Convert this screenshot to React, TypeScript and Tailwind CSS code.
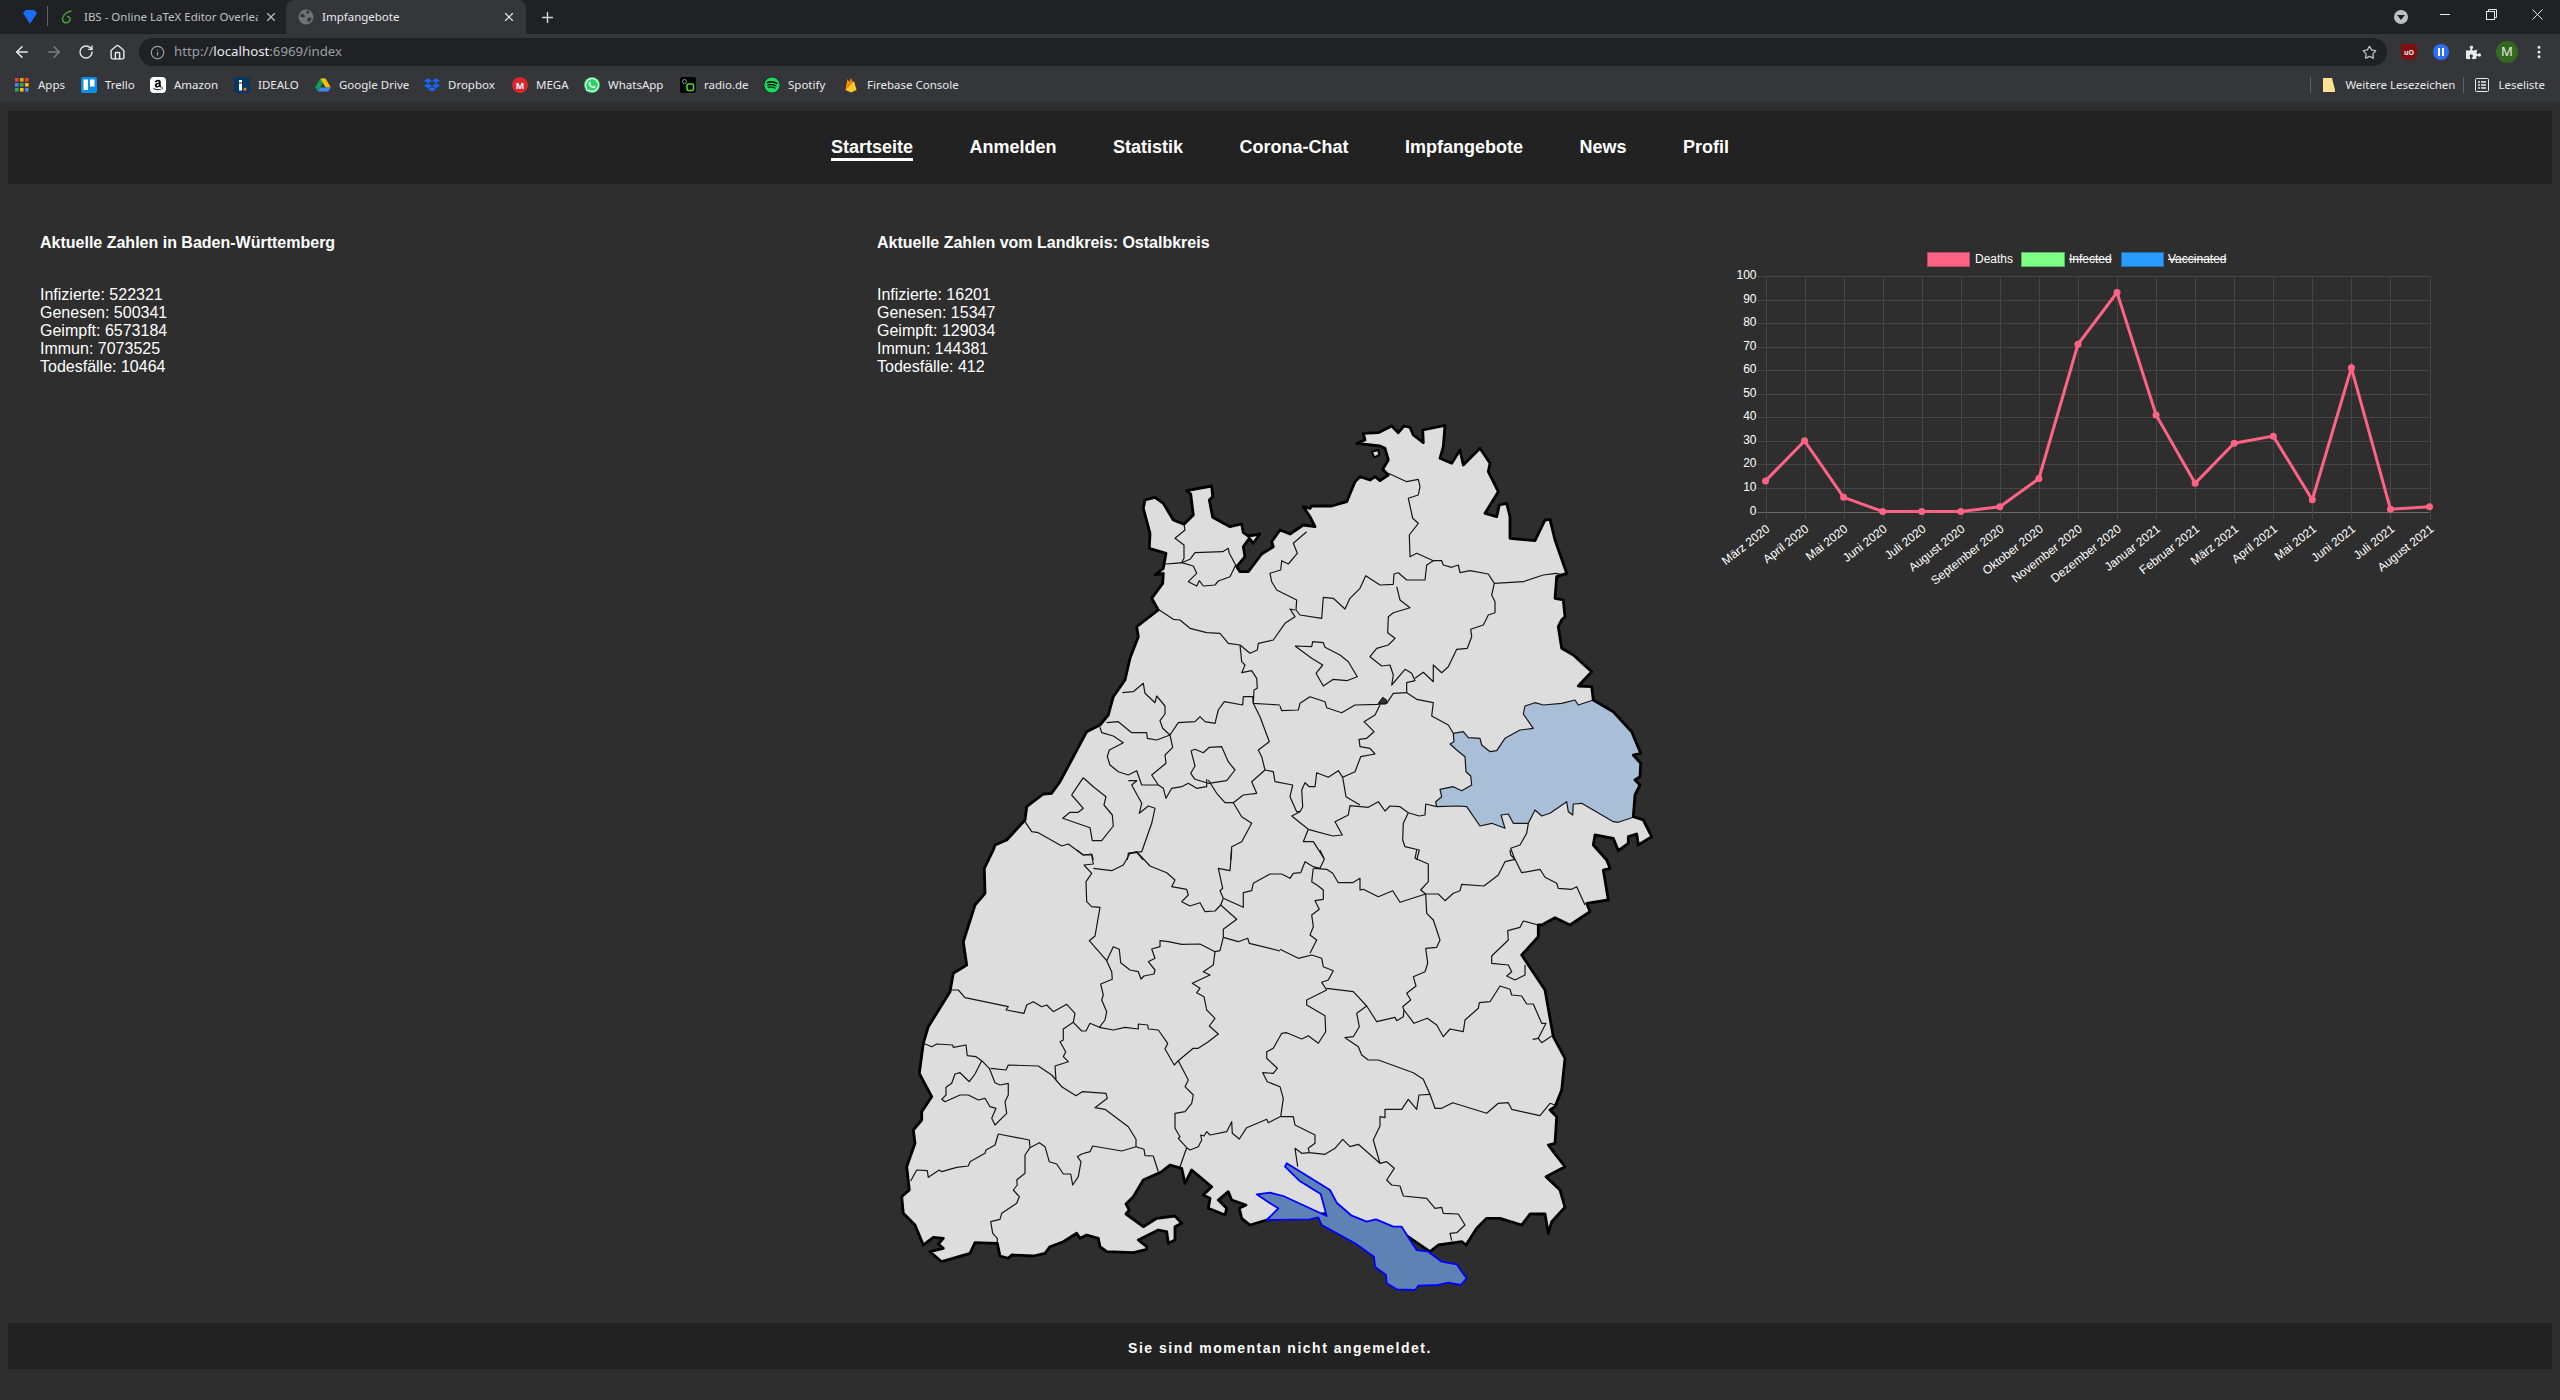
import React from 'react';
import { ArrowLeft, ArrowRight, RotateCw, House, Info, Star, Plus, X, EllipsisVertical } from 'lucide-react';
import { FaWhatsapp, FaDropbox, FaSpotify, FaAmazon, FaPuzzlePiece } from 'react-icons/fa';

// map coordinates were read from four crops of the picture, each 3x, so they get converted here
const ZONES: Record<string, [number, number]> = {
  A: [880, 410],
  B: [1260, 410],
  C: [880, 850],
  D: [1260, 850],
};

const pts = (zone: string, s: string) => {
  const [ox, oy] = ZONES[zone];
  return s
    .trim()
    .split(/\s+/)
    .map((p) => {
      const [x, y] = p.split(',').map(Number);
      return `${(ox + x / 3).toFixed(1)},${(oy + y / 3).toFixed(1)}`;
    })
    .join(' ');
};

const OUTLINE = [
  pts('A', '795,270 825,262 850,280 880,330 912,343 940,315 932,252 920,242 995,228 998,260 988,270 998,322 1050,350 1085,342 1090,368 1105,378 1140,372 1120,400 1108,385 1090,410 1095,440 1070,470 1080,485 1105,485 1145,432'),
  pts('B', '40,410 35,395 60,360 90,372 130,345 165,350 150,320 130,290 150,295 155,288 215,288 260,275 285,215 300,200 330,210 345,200 360,212 385,195 368,178 385,150 375,115 360,108 290,100 315,90 310,70 355,68 395,48 415,68 432,48 450,52 460,75 490,98 488,60 555,46 550,110 540,145 575,160 600,120 610,165 660,115 690,160 685,185 715,245 675,310 710,320 718,285 740,280 750,320 750,385 825,392 855,330 870,328 885,390 920,490 890,500 885,565 910,570 915,620 905,630 895,650 905,715 940,735 995,785 955,828 995,830 1000,870 1060,905 1115,965 1142,1030 1120,1035 1142,1060 1140,1100 1125,1110 1140,1125 1125,1155 1120,1220 1150,1230 1175,1280 1135,1305 1130,1272 1105,1280 1105,1300 1075,1322 1060,1285 1005,1275 1000,1305 1040,1350'),
  pts('D', '1050,55 1030,60 1045,150 980,160 990,185 930,225 885,203 845,225 835,225 835,260 785,315 855,420 880,560 915,625 905,720 885,770 870,780 890,800 885,880 865,885 880,905 915,950 858,980 900,1020 915,1072 875,1115 865,1150 855,1092 810,1092 785,1125 720,1105 680,1105 650,1135 618,1185 605,1175 535,1185 510,1205 430,1150 200,1090 20,1110'),
  pts('C', '1110,1125 1085,1105 1078,1075 1098,1065 1055,1050 1045,1025 1015,1050 1040,1075 1035,1095 985,1075 990,1045 970,1035 995,1010 935,960 915,1000 905,955 870,945 845,965 790,990 760,1040 738,1062 748,1080 738,1092 790,1130 830,1105 885,1098 905,1120 885,1130 885,1170 865,1180 860,1145 835,1140 775,1170 800,1190 800,1198 760,1208 680,1205 660,1190 655,1165 620,1155 600,1165 590,1150 550,1175 510,1190 495,1210 460,1218 395,1215 385,1225 360,1218 352,1180 285,1178 270,1210 185,1235 150,1205 190,1195 175,1182 190,1165 160,1162 130,1185 105,1125 70,1090 65,1040 88,1020 80,950 105,880 100,840 125,810 125,785 155,740 118,670 130,580 145,530 210,425 220,370 260,345 250,275 285,165 315,130 313,55 340,0'),
  pts('A', '345,1305 380,1290 435,1230 440,1190 490,1152 515,1150 540,1115 620,965 660,945 685,915 700,860 735,810 750,745 775,680 770,650 835,600 815,565 848,520 850,490 825,495 850,475 858,430 808,415 810,370 790,295'),
].join(' ');

const OSTALB = pts('B', '580,970 610,965 625,983 660,985 665,1005 690,1025 710,1022 735,985 780,960 820,955 790,912 795,888 825,878 850,885 905,880 945,870 955,885 1000,870 1060,905 1115,965 1142,1030 1120,1035 1142,1060 1140,1100 1125,1110 1140,1125 1125,1155 1120,1222 1075,1237 1060,1235 965,1180 940,1182 938,1215 925,1205 920,1175 870,1210 845,1218 825,1200 805,1240 760,1240 745,1212 723,1215 735,1255 695,1240 660,1248 620,1190 595,1188 530,1190 527,1175 545,1160 540,1138 580,1130 605,1142 635,1125 632,1098 618,1085 615,1040 590,1020 570,1002 582,995');

const LAKE = pts('D', '80,940 210,1020 230,1058 275,1097 320,1115 348,1108 400,1130 425,1130 450,1170 470,1200 505,1205 545,1235 590,1243 605,1265 620,1285 602,1305 565,1298 535,1305 475,1307 465,1320 410,1318 380,1300 378,1275 345,1250 342,1220 285,1180 185,1125 175,1102 150,1108 20,1110 55,1075 30,1060 -10,1033 30,1028 70,1038 200,1098 182,1032 118,992 75,950');

const BORDERS: [string, string][] = [
  ['A', '855,462 885,460 905,458 940,468 950,490 925,515 950,528 958,512 970,528 1005,525 1015,513 1050,500 1067,465'],
  ['A', '905,458 912,445 912,405 885,385 915,360 912,343'],
  ['A', '905,458 930,448 945,428 1028,425 1045,415 1048,430 1067,465'],
  ['A', '838,600 880,628 900,630 930,655 980,668 1020,670 1045,700 1080,705 1110,730 1132,720 1135,700 1180,690 1215,640 1245,620 1230,597 1245,600'],
  ['A', '1080,705 1085,755 1095,765 1085,788 1115,782 1130,805 1132,835 1122,840 1120,880'],
  ['A', '727,848 760,845 790,820 795,850 825,878 830,858 855,888 855,912 840,932 848,955 870,975 895,938 945,935 960,920 975,935 1005,940 1015,900 1033,875 1088,885 1090,860 1118,860 1120,880 1200,885'],
  ['A', '680,938 715,935 755,968 800,968 802,985 830,990 870,975 878,1012 855,1035 858,1060 815,1095 835,1125 785,1125 770,1082 745,1095 715,1085 690,1065 682,1040 688,1020 730,998 700,978 665,968 660,952'],
  ['A', '610,1103 578,1150 575,1155 610,1195 595,1207 570,1207 548,1225 630,1253 637,1292 665,1292 700,1248 697,1215 672,1185 678,1160 640,1130 610,1103'],
  ['A', '933,1022 945,1018 970,1028 988,1012 1025,1010 1045,1055 1065,1080 1040,1112 985,1120 945,1108 932,1090 945,1068 933,1022'],
  ['A', '835,1125 850,1135 858,1165 875,1135 905,1130 925,1120 950,1135 980,1130 980,1108'],
  ['A', '985,1110 1010,1150 1035,1178 1060,1178 1090,1155 1130,1150 1115,1115 1155,1080 1145,1040 1135,1020 1168,995 1140,920 1120,880'],
  ['A', '745,1112 770,1112 755,1125 785,1180 778,1210 805,1188 825,1195 815,1240 785,1325 745,1330 742,1350'],
  ['A', '1060,1178 1085,1220 1115,1240 1085,1295 1055,1310 1052,1350'],
  ['A', '435,1235 455,1265 475,1268 545,1308 565,1302 610,1335 635,1332 640,1350'],
  ['A', '745,1330 770,1327 790,1350'],
  ['B', '140,365 100,400 112,430 85,462 65,452 62,480 30,490 35,515 50,540 110,570 108,600 120,615 185,625 190,562 220,565 255,597 270,565 300,535 317,497 360,525 400,523 402,492 415,488 440,510 495,510 500,465 520,452 470,430 450,440 448,375 475,340 458,325 445,265 475,255 480,230 475,208 440,215 385,190'],
  ['B', '60,888 65,902 115,900 120,880 150,860 195,875 200,893 245,908 285,885 352,883 380,880 400,850 440,848'],
  ['B', '440,848 470,868 520,878 515,918 565,945 580,970'],
  ['B', '440,848 440,818 465,812 455,790 435,778 395,825 400,795 390,765 365,768 330,740 350,715 385,705 405,685 383,668 385,620 400,608 450,593 420,570 410,530'],
  ['B', '520,452 545,452 550,465 575,472 595,465 600,488 630,482 685,492 703,520 695,555 705,575 705,608 685,615 670,645 632,658 635,680 622,715 590,718 565,770 545,788 520,765 520,815 490,787 465,805'],
  ['B', '703,520 790,515 850,495 888,490 920,497'],
  ['B', '105,708 155,710 158,695 190,698 195,712 240,735 265,755 292,800 260,812 220,808 190,828 168,790 188,765 155,745 105,708'],
  ['B', '360,885 345,915 312,935 342,965 320,985 297,988 300,1010 330,1015 345,1032 302,1040 285,1085 248,1102 235,1082 205,1102 170,1088 165,1130 148,1130 135,1118 125,1140 128,1190 120,1205 95,1218 145,1258 218,1278 247,1275 225,1235 265,1215 270,1187 325,1192 355,1175 375,1203 390,1188 420,1190 445,1208 478,1218 495,1215 497,1182 530,1190'],
  ['B', '15,1080 40,1085 45,1115 98,1125 90,1160 110,1205 120,1205'],
  ['B', '145,1258 130,1295 160,1295 192,1345'],
  ['B', '445,1208 430,1240 428,1290 435,1310 478,1320 470,1350'],
  ['B', '805,1240 800,1270 780,1305 752,1315 765,1350'],
  ['B', '248,1102 258,1160 300,1185'],
  ['B', '580,970 610,965 625,983 660,985 665,1005 690,1025 710,1022 735,985 780,960 820,955 790,912 795,888 825,878 850,885 905,880 945,870 955,885 1000,870'],
  ['B', '530,1190 527,1175 545,1160 540,1138 580,1130 605,1142 635,1125 632,1098 618,1085 615,1040 590,1020 570,1002 582,995 580,970'],
  ['B', '530,1190 595,1188 620,1190 660,1248 695,1240 735,1255 723,1215 745,1212 760,1240 805,1240 825,1200 845,1218 870,1210 920,1175 925,1205 938,1215 940,1182 965,1180 1060,1235 1075,1237 1120,1222'],
  ['C', '590,0 610,15 635,15 640,42 612,45 635,70 618,95 620,155 635,170 660,172 645,258 628,272 680,332 695,365 697,388 662,402 670,435 665,450 680,485 675,510 658,532'],
  ['C', '640,55 695,62 730,45 750,10 770,5 810,48 860,68 885,90 875,110 920,118 925,135 905,155 930,168 960,158 975,185 1005,183 1022,165 1030,145 1020,122 1028,115 1015,55 1050,62 1055,0'],
  ['C', '1022,165 1070,208 1030,238 1030,262 1020,302 1005,305 960,282 905,283 865,275 840,272 840,290 815,297 825,325 805,335 825,360 822,372 792,378 783,387 775,365 750,360 722,338 718,298 700,290 680,332'],
  ['C', '1030,145 1090,172 1090,128 1115,122 1120,100 1170,72 1205,72'],
  ['C', '1030,262 1075,275 1103,265 1108,280 1200,303'],
  ['C', '1005,305 1000,345 970,365 990,375 937,400 960,415 950,428 972,440 980,480 1005,505 988,528 1015,552 985,575 955,595 940,595 895,632 883,645 855,597 863,580 835,540 805,537 803,525 775,522 775,537 735,532 700,540 658,532 630,520 618,543 605,543 580,517 585,490 560,463 520,485 500,465 485,470 460,455 440,465 432,490 378,480 385,470 255,443 235,420 212,420'],
  ['C', '580,517 550,537 550,570 540,575 557,605 550,620 565,635 525,648 528,690 545,710 515,675 475,648 385,645 378,660 332,655'],
  ['C', '895,632 925,690 915,710 940,735 935,760 915,785 885,790 885,835 900,860 895,865 920,893 930,900 955,890 965,870 962,855 972,858 980,845 990,855 1040,845 1055,815 1057,850 1078,867 1100,833 1160,808 1165,818 1200,800'],
  ['C', '920,893 900,950'],
  ['C', '545,710 588,737 607,725 678,730 682,745 645,773 675,778 745,830 768,868 768,890 792,898 795,917 820,918 835,965'],
  ['C', '768,890 725,903 638,888 630,905 605,912 592,920 603,935 595,980 578,1005 572,972 550,972 530,942 508,935 495,890 478,878 450,893 435,915 435,970 410,990 412,1005 400,1020 418,1040 410,1060 365,1090 360,1108 332,1115 338,1150 352,1165 352,1180'],
  ['C', '450,893 448,870 355,852 345,885 318,900 315,910 270,935 265,948 230,952 185,965 178,960 145,982 142,962 110,960 92,993'],
  ['C', '130,580 155,590 170,582 218,585 220,592 258,585 262,617 288,620 305,632 328,655 345,698 360,705 385,700 385,735 375,755 380,790 345,825 335,805 348,775 330,770 315,745 295,750 265,735 240,735 195,755 185,748 198,735 198,712 215,700 225,672 240,668 268,695 285,672 305,632'],
  ['D', '65,72 90,85 100,70 122,68 135,35 160,50 180,55 193,28 180,0'],
  ['D', '160,55 155,95 175,108 190,120 190,148 165,152 178,178 155,195 160,230 150,255 170,270 150,310'],
  ['D', '162,55 200,58 218,70 235,98 278,98 300,85 300,120 310,118 355,140 398,122 420,157 497,132'],
  ['D', '470,0 465,25 505,42 505,95 482,120 497,132 535,132 555,152 580,130 600,122 605,103 672,108 715,75 735,35 765,28 785,68 840,58 855,82 890,100 895,115 935,118 950,110 975,165'],
  ['D', '750,0 752,15 765,28'],
  ['D', '497,132 500,190 520,210 540,270 530,292 497,295 503,340 495,365 460,380 468,408 440,430 452,450 428,470 432,480 462,520 502,505 530,525 550,560 570,537 610,545 615,510 655,475 658,458 690,455 720,408 750,418 755,435 785,438 800,462 820,462 845,520 858,520 835,565 845,578 875,558'],
  ['D', '835,565 818,568'],
  ['D', '835,225 790,213 780,232 743,242 745,270 695,318 695,340 745,345 755,365 740,378 765,390 795,375 795,345'],
  ['D', '60,298 115,325 155,315 185,325 190,350 220,362 205,390 185,397 200,420'],
  ['D', '200,415 280,425 320,468 350,515 405,502 410,512 430,500 432,480'],
  ['D', '200,420 140,450 140,465 195,497 197,545 175,580 145,557 125,567 80,548 65,550 40,595 20,605 20,625 52,655 40,670 8,668 22,695 60,710 70,745 62,800 100,800 105,825 165,855 165,880 145,895 148,908 195,913 225,895 248,868 270,890 295,883 360,940 340,870 360,828 360,800 375,803 375,778 425,778 445,748 470,778 477,735 510,733'],
  ['D', '320,468 290,490 298,530 280,560 255,563 295,590 305,615 325,630 355,630 460,668 490,688 510,733 525,775 545,775 578,758 600,765 680,790 715,760 745,758 755,778 840,797 870,760 885,765'],
  ['D', '360,940 380,935 403,955 380,990 395,1005 420,1008 430,1038 500,1045 525,1075 545,1072 550,1090 595,1092 615,1125 590,1148 570,1150 575,1172'],
  ['D', '148,908 125,910 105,895 113,950'],
];

const MONTHS = ['März 2020', 'April 2020', 'Mai 2020', 'Juni 2020', 'Juli 2020', 'August 2020', 'September 2020', 'Oktober 2020', 'November 2020', 'Dezember 2020', 'Januar 2021', 'Februar 2021', 'März 2021', 'April 2021', 'Mai 2021', 'Juni 2021', 'Juli 2021', 'August 2021'];
const DEATHS = [13, 30, 6, 0, 0, 0, 2, 14, 71, 93, 41, 12, 29, 32, 5, 61, 1, 2];

const plot = { left: 1765.5, right: 2429.5, top: 276, bottom: 511.5 };
const xAt = (i: number) => plot.left + (i * (plot.right - plot.left)) / 17;
const yAt = (v: number) => plot.bottom - (v * (plot.bottom - plot.top)) / 100;

const DeathsChart = () => (
  <svg viewBox="1714 234 746 356" width="746" height="356" className="block font-['Liberation_Sans',Arial,sans-serif] text-[12px]">
    {/* legend */}
    <rect x="1927.5" y="252.5" width="42" height="14" fill="#ff6384" stroke="#b34a62" />
    <text x="1975" y="263" fill="#ffffff">Deaths</text>
    <rect x="2021.5" y="252.5" width="43" height="14" fill="#7dff86" stroke="#58b35e" />
    <text x="2069" y="263" fill="#ffffff" textDecoration="line-through">Infected</text>
    <rect x="2121.5" y="252.5" width="42" height="14" fill="#2b9cff" stroke="#1f6fb3" />
    <text x="2168" y="263" fill="#ffffff" textDecoration="line-through">Vaccinated</text>

    {/* grid */}
    {Array.from({ length: 11 }, (_, i) => i * 10).map((v) => (
      <g key={v}>
        <line x1={plot.left - 8} x2={plot.right} y1={Math.round(yAt(v)) + 0.5} y2={Math.round(yAt(v)) + 0.5} stroke={v === 0 ? '#6a6a6a' : '#474747'} />
        <text x={plot.left - 9} y={yAt(v) + 3} textAnchor="end" fill="#ffffff">{v}</text>
      </g>
    ))}
    {MONTHS.map((m, i) => (
      <g key={i}>
        <line x1={Math.round(xAt(i)) + 0.5} x2={Math.round(xAt(i)) + 0.5} y1={plot.top} y2={plot.bottom + 8} stroke="#474747" />
        <text transform={`translate(${xAt(i) + 5} ${plot.bottom + 19}) rotate(-38)`} textAnchor="end" fill="#ffffff">{m}</text>
      </g>
    ))}

    {/* data */}
    <polyline points={DEATHS.map((v, i) => `${xAt(i)},${yAt(v)}`).join(' ')} fill="none" stroke="#ff6384" strokeWidth="3" />
    {DEATHS.map((v, i) => (
      <circle key={i} cx={xAt(i)} cy={yAt(v)} r="3.5" fill="#ff6384" />
    ))}
  </svg>
);

const RegionMap = () => (
  <svg viewBox="880 410 800 900" width="800" height="900" className="block">
    <polygon points={OUTLINE} fill="#dddddd" />
    <polygon points={OSTALB} fill="#a9bfd8" />
    {BORDERS.map(([zone, line], i) => (
      <polyline key={i} points={pts(zone, line)} fill="none" stroke="#151515" strokeWidth="1.2" strokeLinejoin="round" />
    ))}
    <polygon points={OUTLINE} fill="none" stroke="#000000" strokeWidth="2.8" strokeLinejoin="round" />
    <polygon points={pts('B', '355,880 368,862 380,870 378,882')} fill="#333333" stroke="#111111" />
    <polygon points={pts('B', '335,125 355,120 358,135 343,142')} fill="#dddddd" stroke="#000000" strokeWidth="2" />
    <polygon points={LAKE} fill="#5e82b4" stroke="#0000ff" strokeWidth="1.8" strokeLinejoin="round" />
  </svg>
);

const AppsIcon = () => (
  <svg width="16" height="16" viewBox="0 0 16 16">
    {[0, 1, 2].map((r) =>
      [0, 1, 2].map((c) => (
        <rect key={`${r}-${c}`} x={1 + c * 5} y={1 + r * 5} width="3.6" height="3.6" fill={['#ea4335', '#f59e0b', '#ea4335', '#4285f4', '#34a853', '#fbbc04', '#34a853', '#fbbc04', '#4285f4'][r * 3 + c]} />
      ))
    )}
  </svg>
);

const TrelloIcon = () => (
  <svg width="16" height="16" viewBox="0 0 16 16">
    <rect width="16" height="16" rx="2" fill="#0c8fe6" />
    <rect x="2.5" y="2.5" width="4.5" height="10.5" fill="#ffffff" />
    <rect x="9" y="2.5" width="4.5" height="7" fill="#ffffff" />
  </svg>
);

const AmazonIcon = () => (
  <span className="flex h-4 w-4 items-center justify-center rounded-sm bg-white text-[12px] text-black">
    <FaAmazon />
  </span>
);

const IdealoIcon = () => (
  <svg width="16" height="16" viewBox="0 0 16 16">
    <rect width="16" height="16" fill="#0a3761" />
    <rect x="5" y="3" width="3" height="2.4" fill="#ffffff" />
    <rect x="5" y="6.5" width="3" height="7" fill="#ffffff" />
    <rect x="9.5" y="10.8" width="2.8" height="2.8" fill="#f47a20" />
  </svg>
);

const DriveIcon = () => (
  <svg width="16" height="16" viewBox="0 0 16 16">
    <polygon points="5.4,1.5 10.6,1.5 5.4,10.4 2.8,14.4 0.2,10" fill="#0f9d58" />
    <polygon points="5.4,1.5 10.6,1.5 15.8,10.4 10.6,10.4" fill="#fbbc04" />
    <polygon points="5.4,10.4 15.8,10.4 13.2,14.6 2.8,14.6" fill="#4285f4" />
  </svg>
);

const DropboxIcon = () => <FaDropbox size={16} color="#1665f5" />;

const MegaIcon = () => (
  <span className="flex h-4 w-4 items-center justify-center rounded-full bg-[#d9272e] text-[9px] font-bold leading-none text-white">M</span>
);

const WhatsappIcon = () => <FaWhatsapp size={16} color="#ffffff" className="rounded-full bg-[#25d366]" />;

const RadioIcon = () => (
  <svg width="16" height="16" viewBox="0 0 16 16">
    <rect width="16" height="16" rx="2" fill="#000000" />
    <circle cx="4.5" cy="4.5" r="2" fill="none" stroke="#7a9a7a" />
    <rect x="7" y="7" width="6.5" height="6.5" rx="1.5" fill="none" stroke="#53d62b" strokeWidth="1.6" />
  </svg>
);

const SpotifyIcon = () => <FaSpotify size={16} color="#1ed760" className="rounded-full bg-black" />;

const FirebaseIcon = () => (
  <svg width="16" height="16" viewBox="0 0 16 16">
    <polygon points="2.5,13 4.5,2 7,6.5" fill="#ffa000" />
    <polygon points="2.5,13 8,1 10,5.5 13.5,13" fill="#f57c00" />
    <polygon points="2.5,13 11,4 13.5,13 8,15.5" fill="#ffca28" />
  </svg>
);

const BOOKMARKS: { name: string; icon: React.ReactNode; width: string }[] = [
  { name: 'Apps', icon: <AppsIcon />, width: 'w-[67px]' },
  { name: 'Trello', icon: <TrelloIcon />, width: 'w-[69px]' },
  { name: 'Amazon', icon: <AmazonIcon />, width: 'w-[84px]' },
  { name: 'IDEALO', icon: <IdealoIcon />, width: 'w-[81px]' },
  { name: 'Google Drive', icon: <DriveIcon />, width: 'w-[109px]' },
  { name: 'Dropbox', icon: <DropboxIcon />, width: 'w-[88px]' },
  { name: 'MEGA', icon: <MegaIcon />, width: 'w-[72px]' },
  { name: 'WhatsApp', icon: <WhatsappIcon />, width: 'w-[96px]' },
  { name: 'radio.de', icon: <RadioIcon />, width: 'w-[84px]' },
  { name: 'Spotify', icon: <SpotifyIcon />, width: 'w-[79px]' },
  { name: 'Firebase Console', icon: <FirebaseIcon />, width: 'w-[130px]' },
];

const BrowserChrome = () => (
  <div className="font-['Noto_Sans',sans-serif] text-[11.5px] text-[#e8eaed]">
    {/* tab strip */}
    <div className="flex h-[34px] items-end bg-[#202124]">
      <div className="flex h-full w-[47px] items-center justify-end pr-[9px]">
        <svg width="16" height="16" viewBox="0 0 16 16"><polygon points="1,4 4,1 12,1 15,4 8,15" fill="#1a6ef5" /></svg>
      </div>
      <div className="mb-[8px] h-[20px] w-px bg-[#5f6368]" />
      <div className="flex h-full w-[238px] items-center pl-[11px]">
        <svg width="16" height="16" viewBox="0 0 16 16" className="shrink-0">
          <path d="M12.5 2C9 2.5 4 5 3.5 9.5 3.2 12.5 5.5 14 7.5 13.8c2.5-.2 3.6-2.2 3.4-4C10.700 8.100 9.300 7.300 8 7.500" fill="none" stroke="#47a141" strokeWidth="1.5" />
        </svg>
        <span className="ml-[9px] w-[174px] overflow-hidden whitespace-nowrap text-[#bdc1c6]">IBS - Online LaTeX Editor Overleaf</span>
        <X size={14} className="ml-[6px] shrink-0 text-[#bdc1c6]" strokeWidth={2} />
      </div>
      <div className="flex h-full w-[240px] items-center rounded-t-[8px] bg-[#35363a] pl-[12px]">
        {/* site without favicon: dark globe */}
        <svg width="16" height="16" viewBox="0 0 16 16" className="shrink-0">
          <circle cx="8" cy="8" r="7.5" fill="#6f7276" />
          <path d="M3 4.500l3 1 1 2-2 1-3-1zM9 1.500l3 1.500-2 2-2-1zM9.500 9l3.500-.5 .5 2-3 3-1-2z" fill="#35363a" />
        </svg>
        <span className="ml-[8px] w-[180px] text-[#e8eaed]">Impfangebote</span>
        <X size={14} className="shrink-0 text-[#e8eaed]" strokeWidth={2} />
      </div>
      <div className="flex h-full items-center pl-[13px]">
        <Plus size={17} className="text-[#d5d7da]" strokeWidth={2} />
      </div>
      <div className="ml-auto flex h-full items-start">
        <div className="mt-[10px] flex h-[14px] w-[14px] items-center justify-center rounded-full bg-[#bdc1c6]">
          <div className="h-0 w-0 border-x-[4px] border-t-[5px] border-x-transparent border-t-[#202124]" />
        </div>
        <div className="ml-[14px] flex w-[46px] justify-center pt-[14px]"><div className="h-px w-[10px] bg-[#e8eaed]" /></div>
        <div className="flex w-[46px] justify-center pt-[9px]">
          <svg width="11" height="11" viewBox="0 0 11 11" fill="none" stroke="#e8eaed"><rect x="0.500" y="2.500" width="8" height="8" /><path d="M2.500 2.500V.5h8v8H8.500" /></svg>
        </div>
        <div className="flex w-[46px] justify-center pt-[9px]">
          <svg width="11" height="11" viewBox="0 0 11 11" stroke="#e8eaed"><path d="M.5 .5l10 10M10.500 .5l-10 10" /></svg>
        </div>
      </div>
    </div>

    {/* address bar */}
    <div className="flex h-[36px] items-center bg-[#35363a]">
      <ArrowLeft size={18} className="ml-[13px] text-[#e8eaed]" strokeWidth={2} />
      <ArrowRight size={18} className="ml-[14px] text-[#7b7d80]" strokeWidth={2} />
      <RotateCw size={16} className="ml-[15px] text-[#e8eaed]" strokeWidth={2} />
      <House size={17} className="ml-[15px] text-[#e8eaed]" strokeWidth={2} />
      <div className="ml-[13px] flex h-[28px] w-[2248px] items-center rounded-full bg-[#202124] pl-[11px] pr-[10px]">
        <Info size={15} className="text-[#9aa0a6]" strokeWidth={2} />
        <span className="ml-[9px] text-[13.25px] text-[#9aa0a6]">http://<span className="text-[#e8eaed]">localhost</span>:6969/index</span>
        <Star size={15} className="ml-auto text-[#bdc1c6]" strokeWidth={2} />
      </div>
      <div className="ml-[14px] flex h-[16px] w-[16px] items-center justify-center rounded-b-[6px] bg-[#800f0f] text-[7px] font-bold leading-none text-[#e8eaed]">uO</div>
      <div className="ml-[16px] flex h-[16px] w-[16px] items-center justify-center gap-[2px] rounded-full bg-[#2a6ff5]">
        <div className="h-[8px] w-[2px] bg-white" />
        <div className="h-[8px] w-[2px] bg-white" />
      </div>
      <FaPuzzlePiece size={15} className="ml-[17px] text-[#e8eaed]" />
      <div className="ml-[15px] flex h-[22px] w-[22px] items-center justify-center rounded-full bg-[#33691e] text-[13px] text-[#e8eaed]">M</div>
      <EllipsisVertical size={16} className="ml-[13px] text-[#e8eaed]" strokeWidth={2.5} />
    </div>

    {/* bookmarks */}
    <div className="flex h-[32px] items-center bg-[#35363a] pb-[2px] pl-[14px]">
      {BOOKMARKS.map((b) => (
        <div key={b.name} className={`flex items-center gap-[8px] ${b.width}`}>
          <span className="flex h-4 w-4 shrink-0 items-center justify-center">{b.icon}</span>
          <span className="whitespace-nowrap">{b.name}</span>
        </div>
      ))}
      <div className="ml-auto h-[16px] w-px bg-[#5f6368]" />
      <svg width="12" height="14" viewBox="0 0 12 14" className="ml-[12px]"><path d="M0 0h9l3 12v2H0z" fill="#fde293" /></svg>
      <span className="ml-[10px] whitespace-nowrap">Weitere Lesezeichen</span>
      <div className="ml-[8px] h-[16px] w-px bg-[#5f6368]" />
      <svg width="14" height="14" viewBox="0 0 14 14" fill="none" stroke="#e8eaed" className="ml-[11px]"><rect x="0.500" y="0.500" width="13" height="13" rx="1" strokeWidth="1" /><path d="M3 4h2M6 4h5M3 7h2M6 7h5M3 10h2M6 10h5" strokeWidth="1.400" /></svg>
      <span className="ml-[9px] mr-[15px] whitespace-nowrap">Leseliste</span>
    </div>
  </div>
);

const NAV = ['Startseite', 'Anmelden', 'Statistik', 'Corona-Chat', 'Impfangebote', 'News', 'Profil'];

const Stats = ({ title, rows }: { title: string; rows: string[] }) => (
  <div>
    <h2 className="mb-[34px] text-[16px] font-bold leading-[18px]">{title}</h2>
    {rows.map((r) => (
      <p key={r} className="text-[16px] leading-[18px]">{r}</p>
    ))}
  </div>
);

export default function App() {
  return (
    <div className="min-h-[1400px] overflow-hidden bg-[#2e2e2e] font-['Liberation_Sans',Arial,sans-serif] text-white">
      <BrowserChrome />

      <nav className="mx-2 mt-[9px] flex h-[73px] items-center justify-center gap-[56.5px] bg-[#222222]">
        {NAV.map((item, i) => (
          <a key={item} className={`border-b-[3px] pb-[1px] pt-[3px] text-[18px] font-bold leading-[20px] ${i === 0 ? 'border-white' : 'border-transparent'}`}>
            {item}
          </a>
        ))}
      </nav>

      <main className="grid grid-cols-[837px_837px_1fr] px-10 pt-[50px]">
        <Stats
          title="Aktuelle Zahlen in Baden-Württemberg"
          rows={['Infizierte: 522321', 'Genesen: 500341', 'Geimpft: 6573184', 'Immun: 7073525', 'Todesfälle: 10464']}
        />
        <div>
          <Stats
            title="Aktuelle Zahlen vom Landkreis: Ostalbkreis"
            rows={['Infizierte: 16201', 'Genesen: 15347', 'Geimpft: 129034', 'Immun: 144381', 'Todesfälle: 412']}
          />
          <div className="ml-[3px] mt-[34px]">
            <RegionMap />
          </div>
        </div>
        <DeathsChart />
      </main>

      <footer className="mx-2 mt-[13px] flex h-[46px] items-center justify-center bg-[#222222] pt-[4px] text-[14px] font-bold tracking-[1.5px]">
        Sie sind momentan nicht angemeldet.
      </footer>
    </div>
  );
}
